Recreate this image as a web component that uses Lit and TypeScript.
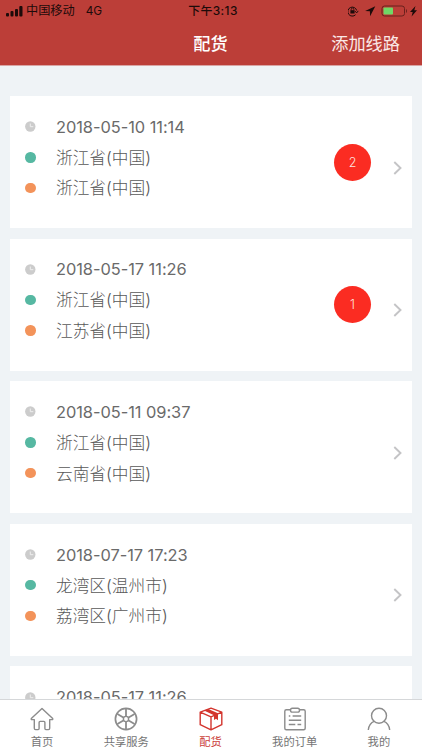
import { LitElement, html, svg, css } from "lit";
import { customElement, property } from "lit/decorators.js";

interface Route {
  time: string;
  from: string;
  to: string;
  count?: number;
}

const routes: Route[] = [
  { time: "2018-05-10 11:14", from: "浙江省(中国)", to: "浙江省(中国)", count: 2 },
  { time: "2018-05-17 11:26", from: "浙江省(中国)", to: "江苏省(中国)", count: 1 },
  { time: "2018-05-11 09:37", from: "浙江省(中国)", to: "云南省(中国)" },
  { time: "2018-07-17 17:23", from: "龙湾区(温州市)", to: "荔湾区(广州市)" },
  { time: "2018-05-17 11:26", from: "浙江省(中国)", to: "浙江省(中国)" },
];

const icons = {
  home: svg`<path d="M12 1.400 1.300 11.600c-.3.500 0 1 .6 1H4.300V21.300q0 1.300 1.300 1.300h2.500q1 0 1-1v-6.200q0-1 1-1h3.800q1 0 1 1v6.200q0 1 1 1h2.500q1.300 0 1.300-1.300V12.600h2.400c.6 0 .9-.5.600-1z"/>`,
  wheel: svg`<circle cx="12" cy="12" r="10.600" stroke-width="1.700"/><circle cx="12" cy="12" r="2.600"/><path d="M12 2v7.400M12 14.600V22M3.400 7l6.400 3.700M14.200 13.300l6.400 3.700M20.600 7l-6.400 3.700M9.800 13.300 3.400 17" stroke-width="1.800"/>`,
  box: svg`<path d="M1.200 5.200 12 1.200 22.800 5.200v12.500L12 22.800 1.200 17.700zM1.200 5.200 12 9.800 22.800 5.200M12 9.800v13"/><path d="M5 3.600 9.200 2 19 6.300v7l-2-1.500-2 1.300V8.300z" fill="currentColor" stroke="none"/>`,
  list: svg`<path d="M7.500 2.800H3.300q-1.500 0-1.500 1.500v17q0 1.500 1.500 1.500h17.400q1.500 0 1.500-1.500v-17q0-1.500-1.500-1.500h-4.200"/><path d="M9.300 1.300h5.400q1.800 0 1.800 1.900t-1.800 1.900H9.300Q7.500 5.100 7.500 3.200t1.800-1.900zM5.800 9h1.500M9.600 9h8.600M5.800 13.300h12.400M5.800 17.500h6.500M14.500 17.500h3.700"/>`,
  user: svg`<circle cx="12" cy="8.700" r="7.500"/><path d="M1.300 23c.3-4 2.600-7.400 6.300-8.900M22.700 23c-.3-4-2.600-7.400-6.300-8.900"/>`,
};

@customElement("status-bar")
class StatusBar extends LitElement {
  static styles = css`
    :host { display: grid; grid-template-columns: 1fr auto 1fr; align-items: center; height: 22px; padding: 0 4px 0 6px; box-sizing: border-box; color: #1d0b0a; font-size: 11.500px; line-height: 22px; }
    .side { display: flex; align-items: center; }
    .signal { width: 17px; height: 11px; margin-right: 3px; }
    .net { margin-left: 11px; font-size: 11.800px; }
    .carrier { font-size: 12.200px; }
    .time { font-weight: 500; font-size: 11.900px; letter-spacing: .4px; padding-left: 2px; }
    .end { justify-content: flex-end; }
    .tray { width: 70px; height: 14px; margin-bottom: 1px; }
  `;
  render() {
    return html`
      <div class="side">
        <svg class="signal" viewBox="0 0 17 11" fill="currentColor"><rect x="0" y="7" width="3" height="3.500" rx="1"/><rect x="4.500" y="5" width="3" height="5.500" rx="1"/><rect x="9" y="3" width="3" height="7.500" rx="1"/><rect x="13.300" y="0" width="3.200" height="10.500" rx="1"/></svg>
        <span class="carrier">中国移动</span><span class="net">4G</span>
      </div>
      <span class="time">下午3:13</span>
      <div class="side end">
        <svg class="tray" viewBox="0 0 70 14" fill="none" stroke="currentColor">
          <path d="M7.600 10.700A4.500 4.500 0 1 1 8.700 6.500M7 7.300l1.800 1.500L10.200 6.900"/>
          <rect x="2.400" y="6.200" width="4.200" height="3.300" fill="currentColor" stroke="none"/>
          <path d="M3.200 6.200V5.300a1.300 1.300 0 0 1 2.600 0v.9" stroke-width=".8"/>
          <path d="M27.300 2.300 17.100 7.100l4.800.2.200 4.900z" fill="currentColor" stroke="none"/>
          <rect x="34" y="2" width="22.500" height="10" rx="2.500" stroke="#69201c"/>
          <rect x="35.500" y="3.500" width="9.500" height="7" rx=".8" fill="#6fd866" stroke="none"/>
          <path d="M58 5v4q1-.6 1-2t-1-2z" fill="#69201c" stroke="none"/>
          <path d="M67.500 2 62 7.900h2.700L63.600 12.400l5.400-6.200h-2.700z" fill="currentColor" stroke="none"/>
        </svg>
      </div>`;
  }
}

@customElement("route-card")
class RouteCard extends LitElement {
  @property({ attribute: false }) route!: Route;
  static styles = css`
    :host { display: flex; align-items: center; flex: none; box-sizing: border-box; height: 132.300px; padding: 0 10px 0 15px; background: #fff; color: #585858; }
    .lines { flex: 1; align-self: flex-start; padding-top: 15.500px; }
    .line { display: flex; align-items: center; height: 30.600px; }
    .mark { width: 11px; height: 11px; margin-right: 19.600px; flex: none; }
    .dot { width: 10.400px; height: 10.400px; border-radius: 50%; margin-right: 20.200px; flex: none; }
    .from { background: #56b8a2; }
    .to { background: #f3935a; }
    .place { font-size: 16.700px; font-weight: 300; line-height: 30px; padding-top: 1px; }
    .time { font-size: 16.400px; line-height: 30px; letter-spacing: -.04px; color: #6a6a6a; }
    .count { display: grid; place-items: center; width: 37px; height: 37px; border-radius: 50%; background: #fb2c22; color: #ffe2df; font-size: 12.500px; font-weight: 300; margin: 0 22px 8px 0; position: relative; top: 4px; }
    .arrow { width: 9px; height: 14px; margin-top: 11px; }
  `;
  render() {
    const r = this.route;
    return html`
      <div class="lines">
        <div class="line"><svg class="mark" viewBox="0 0 11 11"><circle cx="5.300" cy="5.500" r="5.200" fill="#ccc"/><path d="M5.300 2.500v3.200h3" fill="none" stroke="#eee"/></svg><span class="time">${r.time}</span></div>
        <div class="line"><i class="dot from"></i><span class="place">${r.from}</span></div>
        <div class="line"><i class="dot to"></i><span class="place">${r.to}</span></div>
      </div>
      ${r.count ? html`<span class="count">${r.count}</span>` : ""}
      <svg class="arrow" viewBox="0 0 9 14"><path d="M1.300 1 7.500 7l-6.200 6" fill="none" stroke="#c4c4c6" stroke-width="1.900"/></svg>`;
  }
}

@customElement("tab-item")
class TabItem extends LitElement {
  @property() label = "";
  @property() icon: keyof typeof icons = "home";
  @property({ type: Boolean, reflect: true }) active = false;
  static styles = css`
    :host { flex: 1; display: flex; flex-direction: column; align-items: center; padding-top: 7px; color: #8c8c8c; }
    :host([active]) { color: #d3352e; }
    .icon { width: 24px; height: 24px; }
    .label { font-size: 11.300px; line-height: 15px; margin-top: 4px; color: #757575; }
    :host([active]) .label { color: #cb413b; }
  `;
  render() {
    return html`<svg class="icon" viewBox="0 0 24 24" fill="none" stroke="currentColor" stroke-width="1.400" stroke-linejoin="round">${icons[this.icon]}</svg><span class="label">${this.label}</span>`;
  }
}

@customElement("app-root")
class AppRoot extends LitElement {
  static styles = css`
    :host { display: flex; flex-direction: column; width: 422px; height: 750px; overflow: hidden; background: #eff3f6; font-family: Inter, "Noto Sans CJK SC", sans-serif; }
    .header { height: 66px; flex: none; background: #bc3e38; border-bottom: 1px solid #d9a5a4; box-sizing: border-box; }
    .nav { display: grid; grid-template-columns: 1fr auto 1fr; align-items: center; height: 40px; padding: 0 22px 0 21px; color: #fff; font-size: 17.200px; }
    .title { grid-column: 2; font-weight: 500; }
    .add { justify-self: end; color: #fbe9e7; }
    .list { flex: 1; min-height: 0; overflow: hidden; display: flex; flex-direction: column; gap: 10.300px; padding: 30px 10px 0 10.400px; }
    .tabs { display: flex; flex: none; height: 50px; border-top: 1px solid #d5d7d9; background: #fff; padding-right: 1px; }
  `;
  render() {
    return html`
      <div class="header">
        <status-bar></status-bar>
        <div class="nav"><span class="title">配货</span><span class="add">添加线路</span></div>
      </div>
      <div class="list">${routes.map((r) => html`<route-card .route=${r}></route-card>`)}</div>
      <div class="tabs">
        <tab-item icon="home" label="首页"></tab-item>
        <tab-item icon="wheel" label="共享服务"></tab-item>
        <tab-item icon="box" label="配货" active></tab-item>
        <tab-item icon="list" label="我的订单"></tab-item>
        <tab-item icon="user" label="我的"></tab-item>
      </div>`;
  }
}
